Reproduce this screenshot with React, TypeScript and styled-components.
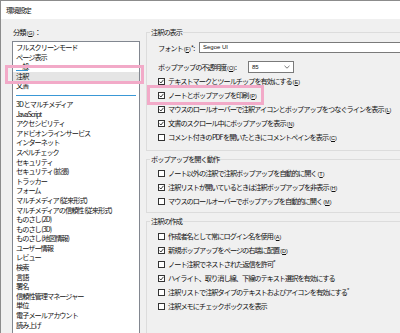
import React from "react";
import styled, { createGlobalStyle } from "styled-components";

type CheckItem = {
  text: string
  acc?: string
  star?: boolean
  checked?: boolean
}

const listTop = [
  { label: "フルスクリーンモード" },
  { label: "ページ表示" },
  { label: "一般", mark: true },
  { label: "注釈", selected: true },
  { label: "文書" },
];

const listRest = [
  "3D とマルチメディア",
  "JavaScript",
  "アクセシビリティ",
  "アドビオンラインサービス",
  "インターネット",
  "スペルチェック",
  "セキュリティ",
  "セキュリティ (拡張)",
  "トラッカー",
  "フォーム",
  "マルチメディア (従来形式)",
  "マルチメディアの信頼性 (従来形式)",
  "ものさし (2D)",
  "ものさし (3D)",
  "ものさし (地図情報)",
  "ユーザー情報",
  "レビュー",
  "検索",
  "言語",
  "署名",
  "信頼性管理マネージャー",
  "単位",
  "電子メールアカウント",
  "読み上げ",
];

const displayChecks: CheckItem[] = [
  { text: "テキストマークとツールチップを有効にする", acc: "E", checked: true },
  { text: "ノートとポップアップを印刷", acc: "P", checked: true },
  { text: "マウスのロールオーバーで注釈アイコンとポップアップをつなぐラインを表示", acc: "L", checked: true },
  { text: "文書のスクロール中にポップアップを表示", acc: "N", checked: true },
  { text: "コメント付きの PDF を開いたときにコメントペインを表示", acc: "C" },
];

const popupChecks: CheckItem[] = [
  { text: "ノート以外の注釈で注釈ポップアップを自動的に開く", acc: "T" },
  { text: "注釈リストが開いているときは注釈ポップアップを非表示", acc: "H", checked: true },
  { text: "マウスのロールオーバーでポップアップを自動的に開く", acc: "M" },
];

const createChecks: CheckItem[] = [
  { text: "作成者名として常にログイン名を使用", acc: "A" },
  { text: "新規ポップアップをページの右端に配置", acc: "D", checked: true },
  { text: "ノート注釈でネストされた返信を許可", star: true },
  { text: "ハイライト、取り消し線、下線のテキスト選択を有効にする", checked: true },
  { text: "注釈リストで注釈タイプのテキストおよびアイコンを有効にする", star: true },
  { text: "注釈メモにチェックボックスを表示" },
];

const Acc: React.FC<{ letter: string }> = ({ letter }) => (
  <AccText>(<u>{letter}</u>)</AccText>
)

const Check: React.FC<{ checked?: boolean }> = ({ checked }) => (
  <CheckBox>
    {checked && (
      <svg width="5" height="5" viewBox="0 0 5 5">
        <polyline points="0.5,2.6 1.9,4 4.5,0.8" fill="none" stroke="#222" strokeWidth="0.9" />
      </svg>
    )}
  </CheckBox>
)

const CheckList: React.FC<{ items: CheckItem[] }> = ({ items }) => (
  <>
    {items.map((item) => (
      <CheckRow key={item.text}>
        <Check checked={item.checked} />
        <span>
          {item.text}
          {item.acc && <Acc letter={item.acc} />}
          {item.star && <Star>*</Star>}
        </span>
      </CheckRow>
    ))}
  </>
)

export default function App() {
  return (
    <>
      <GlobalStyle />
      <Window>
        <TitleBar>環境設定</TitleBar>
        <Body>
          <LeftPane>
            <PaneLabel>分類<Acc letter="G" />：</PaneLabel>
            <ListBox>
              {listTop.map((row) => (
                <ListRow key={row.label} selected={row.selected}>
                  {row.mark ? <Marked>{row.label}</Marked> : row.label}
                </ListRow>
              ))}
              <Separator />
              {listRest.map((label) => (
                <ListRow key={label}>{label}</ListRow>
              ))}
            </ListBox>
          </LeftPane>
          <RightPane>
            <Group>
              <Legend>注釈の表示</Legend>
              <GroupBody top={5} bottom={6}>
                <FieldRow>
                  <FieldLabel width={41}>フォント<Acc letter="F" />*:</FieldLabel>
                  <TextInput>Segoe UI</TextInput>
                </FieldRow>
                <FieldRow spaced>
                  <FieldLabel width={90}>ポップアップの不透明度<Acc letter="O" />:</FieldLabel>
                  <Select>
                    <span>85</span>
                    <svg width="6" height="4" viewBox="0 0 6 4">
                      <polyline points="0.5,0.8 3,3.2 5.5,0.8" fill="none" stroke="#555" strokeWidth="0.8" />
                    </svg>
                  </Select>
                </FieldRow>
                <CheckList items={displayChecks} />
              </GroupBody>
            </Group>
            <Group>
              <Legend>ポップアップを開く動作</Legend>
              <GroupBody top={2} bottom={4}>
                <CheckList items={popupChecks} />
              </GroupBody>
            </Group>
            <Group>
              <Legend>注釈の作成</Legend>
              <GroupBody top={3} bottom={30}>
                <CheckList items={createChecks} />
              </GroupBody>
            </Group>
          </RightPane>
        </Body>
        <Highlight left={4} top={64} width={139} height={19} />
        <Highlight left={146} top={84} width={117} height={20} />
      </Window>
    </>
  )
}

const GlobalStyle = createGlobalStyle`
  html, body {
    margin: 0;
    padding: 0;
    overflow: hidden;
    background: #f0f0f0;
  }
`

const Window = styled.div`
  position: relative;
  box-sizing: border-box;
  width: 480px;
  height: 333px;
  overflow: hidden;
  background: #f0f0f0;
  border-top: 1px solid #8c8c8c;
  border-left: 1px solid #8c8c8c;
  color: #111;
  font-family: "Noto Sans CJK JP", sans-serif;
  font-size: 7.2px;
  letter-spacing: -1px;
`

const TitleBar = styled.div`
  height: 18px;
  display: flex;
  align-items: center;
  padding-left: 5px;
  background: #fff;
`

const Body = styled.div`
  display: flex;
  align-items: flex-start;
  gap: 6px;
  padding: 8px 10px 0 11px;
`

const LeftPane = styled.div`
  width: 128px;
  flex: none;
  display: flex;
  flex-direction: column;
  gap: 4px;
`

const PaneLabel = styled.div`
  height: 10px;
  line-height: 10px;
  padding-left: 1px;
  white-space: nowrap;
`

const ListBox = styled.div`
  height: 300px;
  padding-top: 1px;
  background: #fff;
  border: 1px solid #828790;
  overflow: hidden;
`

const ListRow = styled.div<{ selected?: boolean }>`
  height: 9.6px;
  line-height: 9.6px;
  padding-left: 3px;
  white-space: nowrap;
  overflow: hidden;
  background: ${({ selected }) => (selected ? "#e5e5e5" : "transparent")};
`

const Marked = styled.span`
  display: inline-block;
  border-bottom: 1px solid #3a98d6;
  line-height: 8px;
  height: 8px;
`

const Separator = styled.div`
  height: 9px;
  display: flex;
  align-items: center;
  padding: 0 3px;

  &::after {
    content: "";
    flex: 1;
    height: 1px;
    background: #3a98d6;
  }
`

const RightPane = styled.div`
  flex: 1;
  min-width: 0;
  display: flex;
  flex-direction: column;
  gap: 3px;
`

const Group = styled.fieldset`
  margin: 0;
  padding: 0;
  min-width: 0;
  border: 1px solid #dcdcdc;
`

const Legend = styled.legend`
  margin-left: 3px;
  padding: 0 1px;
  line-height: 10px;
  white-space: nowrap;
`

const GroupBody = styled.div<{ top: number; bottom: number }>`
  display: flex;
  flex-direction: column;
  padding: ${({ top, bottom }) => `${top}px 0 ${bottom}px 11px`};
`

const FieldRow = styled.div<{ spaced?: boolean }>`
  display: flex;
  align-items: center;
  white-space: nowrap;
  margin-top: ${({ spaced }) => (spaced ? "8px" : "0")};
  margin-bottom: ${({ spaced }) => (spaced ? "1px" : "0")};
`

const FieldLabel = styled.span<{ width: number }>`
  flex: none;
  width: ${({ width }) => width}px;
`

const TextInput = styled.div`
  flex: 1;
  box-sizing: border-box;
  height: 11px;
  line-height: 9px;
  padding-left: 3px;
  background: #fff;
  border: 1px solid #7a7a7a;
  font-family: "Liberation Sans", sans-serif;
  font-size: 6px;
  letter-spacing: 0;
`

const Select = styled.div`
  box-sizing: border-box;
  width: 46px;
  height: 12px;
  display: flex;
  align-items: center;
  justify-content: space-between;
  padding: 0 3px;
  background: #fff;
  border: 1px solid #7a7a7a;
  font-family: "Liberation Sans", sans-serif;
  font-size: 6px;
  letter-spacing: 0;
`

const CheckRow = styled.div`
  height: 14px;
  display: flex;
  align-items: center;
  gap: 3px;
  white-space: nowrap;
`

const CheckBox = styled.span`
  box-sizing: border-box;
  width: 7px;
  height: 7px;
  flex: none;
  display: flex;
  align-items: center;
  justify-content: center;
  background: #fff;
  border: 1px solid #333;
`

const AccText = styled.span`
  font-family: "Liberation Sans", sans-serif;
  font-size: 5.5px;
  letter-spacing: 0;
  margin-left: 1px;
`

const Star = styled.span`
  font-family: "Liberation Sans", sans-serif;
  font-size: 6px;
  letter-spacing: 0;
  vertical-align: top;
`

const Highlight = styled.div<{ left: number; top: number; width: number; height: number }>`
  position: absolute;
  left: ${({ left }) => left}px;
  top: ${({ top }) => top}px;
  width: ${({ width }) => width}px;
  height: ${({ height }) => height}px;
  box-sizing: border-box;
  border: 3px solid #f2aac8;
  pointer-events: none;
`
